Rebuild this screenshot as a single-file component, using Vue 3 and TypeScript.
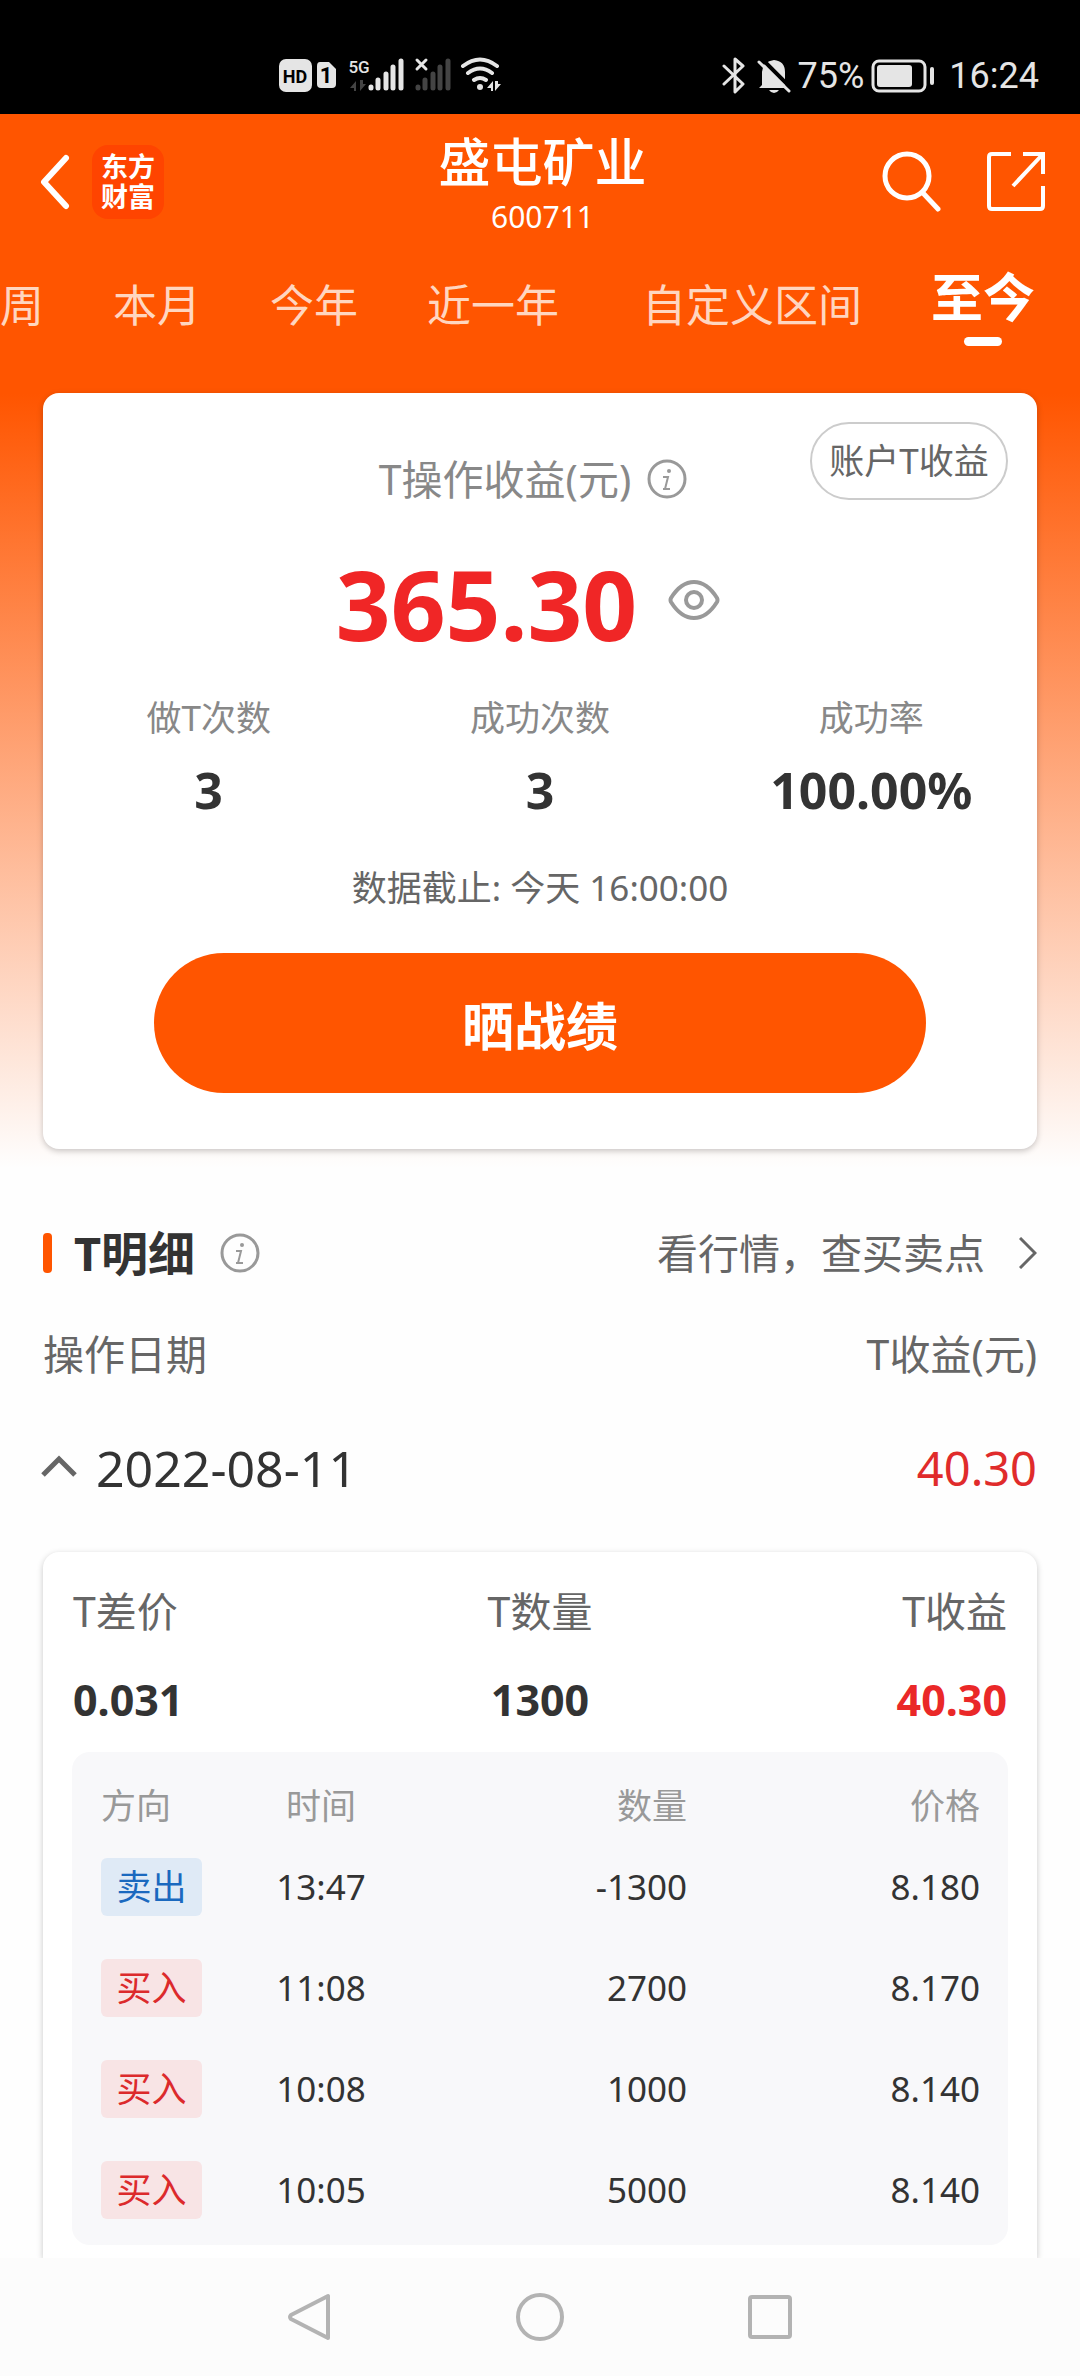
<script setup lang="ts">
interface Tab {
  label: string
  wide?: boolean
}

interface Trade {
  side: 'buy' | 'sell'
  time: string
  quantity: string
  price: string
}

const tabs: Tab[] = [
  { label: '周' },
  { label: '本月' },
  { label: '今年' },
  { label: '近一年' },
  { label: '自定义区间', wide: true },
  { label: '至今' },
]
const activeTab = '至今'

const stats = [
  { label: '做T次数', value: '3' },
  { label: '成功次数', value: '3' },
  { label: '成功率', value: '100.00%' },
]

const summary = [
  { label: 'T差价', value: '0.031', gain: false },
  { label: 'T数量', value: '1300', gain: false },
  { label: 'T收益', value: '40.30', gain: true },
]

const trades: Trade[] = [
  { side: 'sell', time: '13:47', quantity: '-1300', price: '8.180' },
  { side: 'buy', time: '11:08', quantity: '2700', price: '8.170' },
  { side: 'buy', time: '10:08', quantity: '1000', price: '8.140' },
  { side: 'buy', time: '10:05', quantity: '5000', price: '8.140' },
]
</script>

<template>
  <div class="app">
    <div class="status">
      <svg class="status-left" width="224" height="40" viewBox="0 0 224 40" aria-hidden="true">
        <rect x="0" y="3" width="33" height="33" rx="7" fill="#e5e5e5" />
        <text x="16" y="27" text-anchor="middle" class="badge-text" font-size="18">HD</text>
        <path d="M41 6h9l7 7v15q0 4-4 4H42q-4 0-4-4V10q0-4 3-4z" fill="#e5e5e5" />
        <text x="47" y="27" text-anchor="middle" class="badge-text" font-size="22">1</text>
        <text x="80" y="17" text-anchor="middle" class="net-text" font-size="17">5G</text>
        <path d="M77 35V25l-6 7h4v3zM81 24v11l6-7h-3v-4z" fill="#444" />
        <g stroke="#e5e5e5" stroke-width="5" stroke-linecap="round">
          <path d="M92 31v1M99 24v8M107 18v14M114 11v21M122 5v27" />
        </g>
        <path d="M138 4l9 9M147 4l-9 9" stroke="#e5e5e5" stroke-width="3" stroke-linecap="round" />
        <g stroke="#444" stroke-width="5" stroke-linecap="round">
          <path d="M139 31v1M146 24v8M154 18v14M161 11v21M169 5v27" />
        </g>
        <g fill="none" stroke="#e5e5e5" stroke-width="4" stroke-linecap="round">
          <path d="M184 10q17-13 34 0M189 17q12-9 24 0M195 24q6-4 12 0" />
        </g>
        <circle cx="201" cy="31" r="3" fill="#e5e5e5" />
        <path d="M214 35V25l-6 7h4v3zM216 25v10l6-7h-3v-3z" fill="#e5e5e5" />
      </svg>
      <div class="status-right">
        <svg width="24" height="40" viewBox="0 0 24 40" fill="none" stroke="#e5e5e5" stroke-width="3" stroke-linejoin="round" stroke-linecap="round" aria-hidden="true">
          <path d="M2 10l19 18-8 8V3l8 7L2 28" />
        </svg>
        <svg class="bell" width="34" height="40" viewBox="0 0 34 40" aria-hidden="true">
          <path d="M5 29V16Q6 5 17 4Q28 5 28 16v13l2 3H2z" fill="#e5e5e5" />
          <path d="M12 34h10q-2 3-5 3t-5-3z" fill="#e5e5e5" />
          <path d="M5 3l30 30" stroke="#000" stroke-width="4" />
          <path d="M2 6l30 29" stroke="#e5e5e5" stroke-width="3" stroke-linecap="round" />
        </svg>
        <span class="percent">75%</span>
        <svg class="battery" width="64" height="34" viewBox="0 0 64 34" aria-hidden="true">
          <rect x="2" y="2" width="52" height="30" rx="6" fill="none" stroke="#e5e5e5" stroke-width="3" />
          <rect x="6" y="6" width="35" height="22" rx="3" fill="#e5e5e5" />
          <rect x="59" y="8" width="4" height="18" rx="2" fill="#e5e5e5" />
        </svg>
        <span class="clock">16:24</span>
      </div>
    </div>

    <section class="hero">
      <header class="topbar">
        <div class="topbar-left">
          <button type="button" class="icon-button" aria-label="返回">
            <svg width="30" height="56" viewBox="0 0 30 56" fill="none" stroke="#fff" stroke-width="6" stroke-linecap="round" stroke-linejoin="round">
              <path d="M26 4L4 28l22 24" />
            </svg>
          </button>
          <div class="logo">东方财富</div>
        </div>
        <div class="title">
          <h1>盛屯矿业</h1>
          <p>600711</p>
        </div>
        <div class="topbar-right">
          <button type="button" class="icon-button" aria-label="搜索">
            <svg width="60" height="62" viewBox="0 0 60 62" fill="none" stroke="#fff" stroke-width="5" stroke-linecap="round">
              <circle cx="26" cy="25" r="22" />
              <path d="M42 42l15 16" />
            </svg>
          </button>
          <button type="button" class="icon-button" aria-label="分享">
            <svg width="58" height="60" viewBox="0 0 58 60" fill="none" stroke="#fff" stroke-width="4">
              <path d="M24 2H5q-3 0-3 3v49q0 3 3 3h48q3 0 3-3V34" />
              <path d="M36 2h20v20M55 3L26 34" />
            </svg>
          </button>
        </div>
      </header>

      <nav class="tabs">
        <button
          v-for="tab in tabs"
          :key="tab.label"
          type="button"
          class="tab"
          :class="{ active: tab.label === activeTab, wide: tab.wide }"
        >
          {{ tab.label }}
        </button>
      </nav>

      <div class="card profit-card">
        <div class="card-head">
          <div class="card-title">
            <span>T操作收益(元)</span>
            <svg class="info" viewBox="0 0 40 40" aria-hidden="true">
              <circle cx="20" cy="20" r="18" />
              <path d="M16 18h5l-3 12M16 30h7" />
              <circle class="dot" cx="22" cy="12" r="2" />
            </svg>
          </div>
          <button type="button" class="account">账户T收益</button>
        </div>
        <div class="amount">
          <strong>365.30</strong>
          <button type="button" class="icon-button" aria-label="隐藏金额">
            <svg width="52" height="48" viewBox="0 0 52 48" fill="none" stroke="#999" stroke-width="4">
              <path d="M3 18Q13 2 26 2t23 16q1 2 0 4Q39 38 26 38T3 22q-1-2 0-4z" />
              <circle cx="26" cy="20" r="8" />
            </svg>
          </button>
        </div>
        <div class="stats">
          <div v-for="stat in stats" :key="stat.label" class="stat">
            <span>{{ stat.label }}</span>
            <strong>{{ stat.value }}</strong>
          </div>
        </div>
        <p class="deadline">数据截止: 今天 16:00:00</p>
        <button type="button" class="share">晒战绩</button>
      </div>
    </section>

    <main class="details">
      <div class="section-head">
        <h2>T明细</h2>
        <svg class="info" viewBox="0 0 40 40" aria-hidden="true">
          <circle cx="20" cy="20" r="18" />
          <path d="M16 18h5l-3 12M16 30h7" />
          <circle class="dot" cx="22" cy="12" r="2" />
        </svg>
        <a href="#" class="market">
          看行情，查买卖点
          <svg width="18" height="32" viewBox="0 0 18 32" fill="none" stroke="#666" stroke-width="3">
            <path d="M1 1l15 15L1 31" />
          </svg>
        </a>
      </div>
      <div class="list-head"><span>操作日期</span><span>T收益(元)</span></div>
      <button type="button" class="day">
        <svg width="36" height="28" viewBox="0 0 36 28" fill="none" stroke="#666" stroke-width="5">
          <path d="M2 21L18 5l16 16" />
        </svg>
        <span>2022-08-11</span>
        <span class="day-gain">40.30</span>
      </button>

      <div class="card day-card">
        <div class="summary">
          <div v-for="item in summary" :key="item.label" class="summary-item">
            <span>{{ item.label }}</span>
            <strong :class="{ gain: item.gain }">{{ item.value }}</strong>
          </div>
        </div>
        <div class="panel">
          <table>
            <colgroup>
              <col class="col-side" />
              <col class="col-time" />
              <col class="col-quantity" />
              <col />
            </colgroup>
            <thead>
              <tr><th>方向</th><th>时间</th><th>数量</th><th>价格</th></tr>
            </thead>
            <tbody>
              <tr v-for="trade in trades" :key="trade.time">
                <td><span class="tag" :class="trade.side">{{ trade.side === 'sell' ? '卖出' : '买入' }}</span></td>
                <td>{{ trade.time }}</td>
                <td>{{ trade.quantity }}</td>
                <td>{{ trade.price }}</td>
              </tr>
            </tbody>
          </table>
        </div>
      </div>
    </main>

    <footer class="navbar">
      <button type="button" class="icon-button" aria-label="返回">
        <svg width="48" height="50" viewBox="0 0 48 50"><path d="M42 4v42L5 27q-2-2 0-4z" /></svg>
      </button>
      <button type="button" class="icon-button" aria-label="主页">
        <svg width="48" height="50" viewBox="0 0 48 50"><circle cx="24" cy="25" r="22" /></svg>
      </button>
      <button type="button" class="icon-button" aria-label="最近任务">
        <svg width="48" height="50" viewBox="0 0 48 50"><rect x="4" y="5" width="40" height="40" rx="2" /></svg>
      </button>
    </footer>
  </div>
</template>

<style>
body {
  margin: 0;
}
</style>

<style scoped>
.app {
  display: flex;
  flex-direction: column;
  min-height: 100vh;
  overflow: hidden;
  background: #fefefe;
  color: #333;
  font-family: "Noto Sans", "Noto Sans CJK SC", sans-serif;
}
h1,
h2,
p {
  margin: 0;
}
button {
  padding: 0;
  border: 0;
  background: none;
  color: inherit;
  font: inherit;
}
svg {
  display: block;
  flex: none;
}

.status {
  display: flex;
  align-items: center;
  justify-content: space-between;
  box-sizing: border-box;
  height: 114px;
  padding: 56px 41px 18px 279px;
  background: #000;
  color: #e5e5e5;
  font-family: Roboto, sans-serif;
  font-size: 36px;
  line-height: 40px;
}
.status-right {
  display: flex;
  align-items: center;
}
.badge-text {
  fill: #000;
  font-family: Roboto, sans-serif;
  font-weight: 700;
}
.net-text {
  fill: #e5e5e5;
  font-family: Roboto, sans-serif;
  font-weight: 500;
}
.bell {
  margin-left: 11px;
}
.percent {
  margin-left: 7px;
}
.battery {
  margin: 0 14px 0 7px;
}

.hero {
  padding-bottom: 41px;
  background: linear-gradient(#ff5500 26%, #fefefe 98%);
}
.topbar {
  display: grid;
  grid-template-columns: 1fr auto 1fr;
  align-items: center;
  height: 136px;
  padding: 0 35px 0 40px;
  color: #fff;
}
.topbar-left,
.topbar-right {
  display: flex;
  align-items: center;
  gap: 22px;
}
.topbar-right {
  justify-content: flex-end;
  gap: 46px;
}
.logo {
  box-sizing: border-box;
  width: 72px;
  height: 74px;
  padding: 7px 9px;
  border-radius: 16px;
  background: #ff4400;
  font-size: 27px;
  font-weight: 700;
  line-height: 30px;
}
.title {
  text-align: center;
}
.title h1 {
  font-size: 52px;
  font-weight: 500;
  line-height: 70px;
}
.title p {
  font-size: 30px;
  line-height: 40px;
}

.tabs {
  display: flex;
  align-items: flex-start;
  gap: 69px;
  padding-top: 16px;
  height: 80px;
  color: #ffd6c0;
  font-size: 44px;
  line-height: 52px;
  white-space: nowrap;
}
.tab {
  flex: none;
  padding-top: 13px;
}
.tab.wide {
  margin-left: 14px;
}
.tab.active {
  display: flex;
  flex-direction: column;
  align-items: center;
  padding-top: 0;
  color: #fff;
  font-size: 52px;
  font-weight: 700;
  line-height: 62px;
}
.tab.active::after {
  content: "";
  width: 38px;
  height: 9px;
  margin-top: 9px;
  border-radius: 5px;
  background: #fff;
}

.card {
  border-radius: 16px;
  background: #fff;
  box-shadow: 0 2px 6px rgba(0, 0, 0, 0.22);
}
.profit-card {
  margin: 47px 43px 0;
  padding-bottom: 56px;
}
.card-head {
  display: grid;
  grid-template-columns: 1fr auto 1fr;
  align-items: start;
  padding: 29px 29px 0;
}
.card-title {
  display: flex;
  grid-column: 2;
  align-items: center;
  gap: 16px;
  margin-top: 33px;
  padding-right: 14px;
  color: #888;
  font-size: 41px;
  line-height: 48px;
}
.info {
  width: 40px;
  height: 40px;
  fill: none;
  stroke: #999;
  stroke-width: 3;
}
.info path {
  stroke-width: 2;
}
.info .dot {
  fill: #999;
  stroke: none;
}
.account {
  justify-self: end;
  box-sizing: border-box;
  width: 198px;
  height: 78px;
  border: 2px solid #ccc;
  border-radius: 39px;
  color: #666;
  font-size: 35px;
  line-height: 44px;
}
.amount {
  display: flex;
  align-items: center;
  justify-content: center;
  gap: 31px;
  margin-top: 45px;
  padding-right: 24px;
  color: #f02626;
  font-size: 96px;
  line-height: 112px;
}
.stats {
  display: flex;
  margin-top: 36px;
}
.stat {
  display: flex;
  flex: 1;
  flex-direction: column;
  align-items: center;
  gap: 20px;
  color: #888;
  font-size: 35px;
  line-height: 44px;
}
.stat strong {
  color: #333;
  font-size: 50px;
  line-height: 60px;
}
.deadline {
  margin-top: 46px;
  color: #666;
  font-size: 35px;
  line-height: 44px;
  text-align: center;
}
.share {
  display: block;
  width: calc(100% - 222px);
  height: 140px;
  margin: 43px 111px 0;
  border-radius: 70px;
  background: #ff5500;
  color: #fff;
  font-size: 52px;
  font-weight: 700;
}

.details {
  display: flex;
  flex: 1;
  flex-direction: column;
  padding: 33px 43px 0;
}
.section-head {
  display: flex;
  align-items: center;
  line-height: 60px;
}
.section-head h2 {
  display: flex;
  align-items: center;
  margin-right: 25px;
  font-size: 47px;
}
.section-head h2::before {
  content: "";
  width: 9px;
  height: 40px;
  margin-right: 22px;
  border-radius: 4px;
  background: #ff5500;
}
.market {
  display: flex;
  align-items: center;
  gap: 34px;
  margin-left: auto;
  color: #666;
  font-size: 41px;
  text-decoration: none;
}
.list-head {
  display: flex;
  justify-content: space-between;
  margin-top: 46px;
  color: #666;
  font-size: 41px;
  line-height: 50px;
}
.day {
  display: flex;
  align-items: center;
  margin-top: 59px;
  font-size: 50px;
  line-height: 60px;
}
.day svg {
  margin: 0 19px 0 -2px;
}
.day-gain {
  margin-left: auto;
  color: #e02b2b;
  font-size: 47px;
}
.day-card {
  flex: 1;
  margin-top: 54px;
  padding: 34px 29px 13px;
  border-radius: 16px 16px 0 0;
}
.summary {
  display: grid;
  grid-template-columns: 1fr 1fr 1fr;
  padding: 0 1px;
}
.summary-item {
  display: flex;
  flex-direction: column;
  align-items: center;
  gap: 39px;
  color: #666;
  font-size: 41px;
  line-height: 50px;
}
.summary-item:first-child {
  align-items: flex-start;
}
.summary-item:last-child {
  align-items: flex-end;
}
.summary-item strong {
  color: #333;
  font-size: 43px;
}
.summary-item .gain {
  color: #ea2828;
}
.panel {
  margin-top: 27px;
  padding: 24px 28px 5px 29px;
  border-radius: 18px;
  background: #f8f8fa;
}
table {
  width: 100%;
  border-collapse: collapse;
  table-layout: fixed;
  font-size: 35px;
  line-height: 44px;
  text-align: right;
}
.col-side {
  width: 132px;
}
.col-time {
  width: 176px;
}
.col-quantity {
  width: 278px;
}
th {
  height: 60px;
  padding: 0;
  color: #999;
  font-weight: 400;
}
td {
  height: 101px;
  padding: 0;
}
th:first-child,
td:first-child {
  text-align: left;
}
th:nth-child(2),
td:nth-child(2) {
  text-align: center;
}
.tag {
  display: block;
  width: 101px;
  border-radius: 6px;
  line-height: 58px;
  text-align: center;
}
.tag.sell {
  background: #dfeaf6;
  color: #1b69bf;
}
.tag.buy {
  background: #f8e4e5;
  color: #dc2a2c;
}

.navbar {
  position: relative;
  display: flex;
  align-items: center;
  justify-content: center;
  gap: 182px;
  height: 118px;
  background: #fcfcfc;
}
.navbar svg {
  fill: none;
  stroke: #b3b3b3;
  stroke-width: 4;
  stroke-linejoin: round;
}
</style>
